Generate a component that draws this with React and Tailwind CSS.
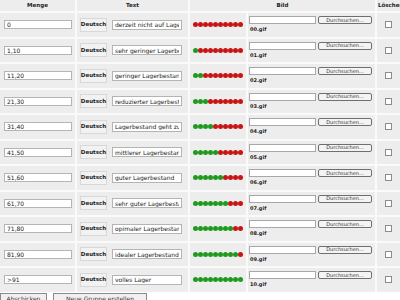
const rows = [
  { menge: '0', text: 'derzeit nicht auf Lager', file: '00.gif' },
  { menge: '1,10', text: 'sehr geringer Lagerbestand', file: '01.gif' },
  { menge: '11,20', text: 'geringer Lagerbestand', file: '02.gif' },
  { menge: '21,30', text: 'reduzierter Lagerbestand', file: '03.gif' },
  { menge: '31,40', text: 'Lagerbestand geht zu rapide', file: '04.gif' },
  { menge: '41,50', text: 'mittlerer Lagerbestand', file: '05.gif' },
  { menge: '51,60', text: 'guter Lagerbestand', file: '06.gif' },
  { menge: '61,70', text: 'sehr guter Lagerbestand', file: '07.gif' },
  { menge: '71,80', text: 'opimaler Lagerbestand', file: '08.gif' },
  { menge: '81,90', text: 'idealer Lagerbestand', file: '09.gif' },
  { menge: '>91', text: 'volles Lager', file: '10.gif' },
]

const cols = 'grid grid-cols-[75px_111px_56px_127px_26px] gap-x-[2px]'

function Dots({ green }) {
  return (
    <div className="flex pl-[3px]">
      {Array.from({ length: 10 }).map((_, i) => (
        <span
          key={i}
          className={
            'w-[5px] h-[5px] rounded-full ' +
            (i < green ? 'bg-[#1f9a1f]' : 'bg-[#c81414]')
          }
        />
      ))}
    </div>
  )
}

export default function App() {
  return (
    <div
      className="w-[400px] h-[300px] overflow-hidden bg-white text-[#333] text-[6px] leading-none"
      style={{ fontFamily: '"DejaVu Sans", Verdana, sans-serif' }}
    >
      <div className="w-[403px] bg-[#fafafa] flex flex-col gap-y-[2px]">
        <div className={cols + ' h-[11px] font-bold text-[5.5px] text-[#222]'}>
          <div className="bg-[#ededed] flex items-center justify-center">Menge</div>
          <div className="bg-[#ededed] flex items-center justify-center">Text</div>
          <div className="col-span-2 bg-[#ededed] flex items-center justify-center">Bild</div>
          <div className="bg-[#ededed] flex items-center pl-[1px] whitespace-nowrap">Löschen</div>
        </div>
        {rows.map((r, idx) => (
          <div key={idx} className={cols + ' h-[23.5px]'}>
            <div className="bg-[#ededed] flex items-center pl-[4px]">
              <input
                readOnly
                value={r.menge}
                className="w-[68px] h-[9px] bg-white border border-[#b4b4b4] px-[2px] text-[6px] text-[#222] outline-none"
              />
            </div>
            <div className="bg-[#ededed] flex items-center pl-[3px] gap-[5px]">
              <div className="w-[27px] h-[14px] border border-[#d8d8d8] bg-[#f2f2f2] flex items-center justify-center font-bold text-[5.5px] text-[#222]">
                Deutsch
              </div>
              <input
                readOnly
                value={r.text}
                className="w-[70px] h-[10px] bg-white border border-[#b4b4b4] px-[2px] text-[6px] text-[#222] outline-none"
              />
            </div>
            <div className="bg-[#ededed] flex items-center">
              <Dots green={idx} />
            </div>
            <div className="bg-[#ededed] flex flex-col pl-[1px] pt-[3px]">
              <div className="flex items-center gap-[2px]">
                <div className="w-[67px] h-[8px] bg-white border border-[#a8a8a8]" />
                <div className="w-[54px] h-[8px] border border-[#6f6f6f] rounded-[2px] bg-[#f4f4f4] flex items-center justify-center text-[5px]">
                  Durchsuchen...
                </div>
              </div>
              <div className="mt-[3px] pl-[1px] font-bold text-[5px] text-[#222]">{r.file}</div>
            </div>
            <div className="bg-[#ededed] flex items-center pl-[8px]">
              <span className="w-[7px] h-[7px] border border-[#8c8c8c] bg-white" />
            </div>
          </div>
        ))}
      </div>
      <div className="flex gap-[6px] mt-[1px]">
        <div className="w-[47px] h-[12px] border border-[#8a8a8a] bg-[#f0f0f0] flex justify-center pt-[2px] text-[6px]">
          Abschicken
        </div>
        <div className="w-[94px] h-[12px] border border-[#8a8a8a] bg-[#f0f0f0] flex justify-center pt-[2px] text-[6px]">
          Neue Gruppe erstellen
        </div>
      </div>
    </div>
  )
}
